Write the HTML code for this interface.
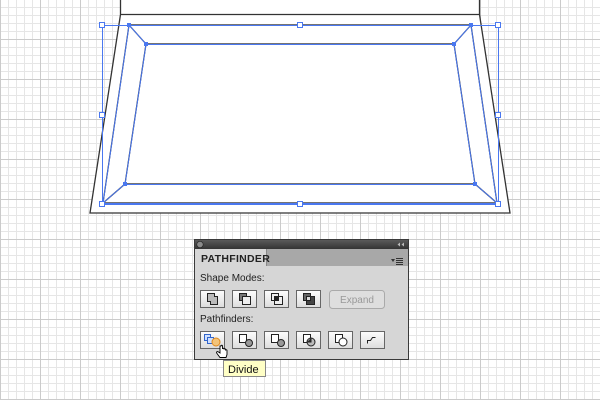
<!DOCTYPE html>
<html><head><meta charset="utf-8"><style>
body{margin:0;width:600px;height:400px;overflow:hidden;font-family:"Liberation Sans",sans-serif;background:#fff}
</style></head><body>
<svg width="600" height="400" viewBox="0 0 600 400" style="position:absolute;left:0;top:0">
<defs>
<pattern id="mn" width="8" height="8" patternUnits="userSpaceOnUse" x="0" y="-1">
<path d="M0.5 0V8M0 0.5H8" stroke="#e6e6e6" stroke-width="1" fill="none"/></pattern>
<pattern id="mj" width="40" height="40" patternUnits="userSpaceOnUse" x="0" y="-1">
<path d="M0.5 0V40M0 0.5H40" stroke="#cbcbcb" stroke-width="1" fill="none"/></pattern>
<linearGradient id="bt" x1="0" y1="0" x2="0" y2="1"><stop offset="0" stop-color="#fdfdfd"/><stop offset="1" stop-color="#dcdcdc"/></linearGradient>
<linearGradient id="tb" x1="0" y1="0" x2="0" y2="1"><stop offset="0" stop-color="#5a5a5a"/><stop offset="1" stop-color="#343434"/></linearGradient>
</defs>
<rect width="600" height="400" fill="url(#mn)"/>
<rect width="600" height="400" fill="url(#mj)"/>
<path d="M120.5 0 L479.5 0 L479.5 14 L510 213 L90 213 L120.5 14 Z" fill="#fff"/>
<path d="M120.5 0 V14.5 M479.5 0 V14.5 M120 14.5 H480 M120.5 14.5 L90 213 H510 L479.5 14.5" stroke="#333" stroke-width="1.3" fill="none"/>
<path d="M129 25 L471 25 L497 203 L103 203 Z" fill="none" stroke="#222" stroke-width="1.2"/>
<path d="M146 44 L454 44 L475 184 L125 184 Z" fill="none" stroke="#222" stroke-width="1.2"/>
<path d="M129 25 L146 44 M471 25 L454 44 M497 203 L475 184 M103 203 L125 184" stroke="#222" stroke-width="1.2"/>
<g stroke="#4a78f0" stroke-width="1" fill="none">
<path d="M129 25.5 L471 25.5 L497 203.5 L103 203.5 Z"/>
<path d="M146 44.5 L454 44.5 L475 184.5 L125 184.5 Z"/>
<path d="M129 25 L146 44 M471 25 L454 44 M497 203 L475 184 M103 203 L125 184"/>
<rect x="102.5" y="25.5" width="396" height="179"/>
</g>
<g fill="#4a78f0">
<rect x="144" y="42" width="4" height="4"/><rect x="452" y="42" width="4" height="4"/>
<rect x="473" y="182" width="4" height="4"/><rect x="123" y="182" width="4" height="4"/>
<rect x="127" y="23" width="4" height="4"/><rect x="469" y="23" width="4" height="4"/>
</g>
<g fill="#fff" stroke="#4a78f0" stroke-width="1">
<rect x="99.5" y="22.5" width="5" height="5"/><rect x="297.5" y="22.5" width="5" height="5"/><rect x="495.5" y="22.5" width="5" height="5"/>
<rect x="99.5" y="112.5" width="5" height="5"/><rect x="495.5" y="112.5" width="5" height="5"/>
<rect x="99.5" y="201.5" width="5" height="5"/><rect x="297.5" y="201.5" width="5" height="5"/><rect x="495.5" y="201.5" width="5" height="5"/>
</g>
<rect x="194.5" y="239.5" width="214" height="120" fill="#d6d6d6" stroke="#3a3a3a"/>
<rect x="195" y="240" width="213" height="9" fill="url(#tb)"/>
<circle cx="200" cy="244.5" r="3.2" fill="#8a8a8a" stroke="#222" stroke-width="0.6"/>
<path d="M400 242.5 L397.5 244.5 L400 246.5Z M404 242.5 L401.5 244.5 L404 246.5Z" fill="#bbb"/>
<rect x="195" y="249" width="213" height="17" fill="#a8a8a8"/>
<rect x="195" y="249" width="71" height="18" fill="#d6d6d6"/>
<line x1="266.5" y1="249" x2="266.5" y2="266" stroke="#888"/>
<text x="201" y="262" font-size="10.5" font-weight="bold" fill="#222" letter-spacing="0.3">PATHFINDER</text>
<path d="M391 259 L393 262 L395 259Z" fill="#333"/>
<path d="M396 258.5H403M396 260.5H403M396 262.5H403M396 264.5H403" stroke="#333" stroke-width="1"/>
<text x="200" y="281" font-size="10" fill="#222">Shape Modes:</text>
<text x="200" y="322" font-size="10" fill="#222">Pathfinders:</text>
<g stroke="#666" stroke-width="1" fill="url(#bt)">
<rect x="200.5" y="290.5" width="24" height="17"/><rect x="232.5" y="290.5" width="24" height="17"/>
<rect x="264.5" y="290.5" width="24" height="17"/><rect x="296.5" y="290.5" width="24" height="17"/>
<rect x="200.5" y="331.5" width="24" height="17"/><rect x="232.5" y="331.5" width="24" height="17"/>
<rect x="264.5" y="331.5" width="24" height="17"/><rect x="296.5" y="331.5" width="24" height="17"/>
<rect x="328.5" y="331.5" width="24" height="17"/><rect x="360.5" y="331.5" width="24" height="17"/>
</g>
<rect x="329.5" y="290.5" width="55" height="18" rx="3" fill="#dedede" stroke="#aaa"/>
<text x="357" y="303" font-size="10" fill="#999" text-anchor="middle">Expand</text>
<g stroke="#222" stroke-width="1">
<path d="M207.5 293.5h7v3h3v8h-7v-3h-3z" fill="#bbb"/>
<rect x="239.5" y="293.5" width="7" height="7" fill="#777"/><rect x="242.5" y="296.5" width="8" height="8" fill="#eee"/>
<rect x="271.5" y="293.5" width="7" height="7" fill="#eee"/><rect x="274.5" y="296.5" width="8" height="8" fill="#eee"/><rect x="274.5" y="296.5" width="4" height="4" fill="#222"/>
<rect x="303.5" y="293.5" width="7" height="7" fill="#666"/><rect x="306.5" y="296.5" width="8" height="8" fill="#444"/><rect x="306.5" y="296.5" width="4" height="4" fill="#ddd"/>
</g>
<g stroke-width="1">
<rect x="204.5" y="334.5" width="6" height="6" fill="#cfe0ff" stroke="#3366cc"/>
<rect x="207.5" y="337.5" width="6" height="6" fill="#cfe0ff" stroke="#3366cc"/>
<circle cx="216" cy="342" r="4" fill="#f3c47a" stroke="#e08a1e"/>
<g stroke="#222">
<rect x="239.5" y="334.5" width="7" height="8" fill="#fff"/><circle cx="249" cy="343" r="3.5" fill="#999"/>
<rect x="271.5" y="334.5" width="7" height="8" fill="#fff"/><circle cx="281" cy="343" r="3.5" fill="#999"/>
<rect x="303.5" y="334.5" width="7" height="8" fill="#fff"/><circle cx="311" cy="342" r="4" fill="#bbb"/><path d="M307 342h4v-4" fill="#333"/>
<rect x="335.5" y="334.5" width="7" height="8" fill="#fff"/><circle cx="343" cy="342" r="4" fill="#fff"/>
<path d="M367.5 343.5v-3h3l2-3h3" fill="none"/>
</g></g>
<path d="M220 346 v7 l-1.5 -1 c-1.5 -1 -2.5 0 -1.5 1.5 l3 4 h6 l1 -3 v-4 c0 -1 -1.5 -1 -1.5 0 v-1 c0 -1 -1.5 -1 -1.5 0 v-0.5 c0 -1 -1.5 -1 -1.5 0 v-3 c0 -1 -1.5 -1 -1.5 0z" fill="#fff" stroke="#000" stroke-width="0.9"/>
<rect x="223.5" y="360.5" width="42" height="16" fill="#ffffc6" stroke="#888"/>
<text x="228" y="373" font-size="11" fill="#111">Divide</text>
</svg>
</body></html>
